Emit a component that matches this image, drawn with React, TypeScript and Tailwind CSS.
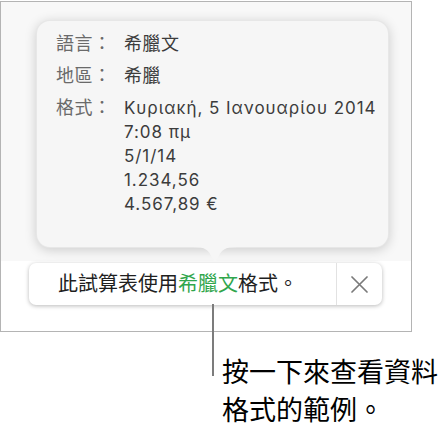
const font = { fontFamily: '"Inter", "Noto Sans CJK TC", sans-serif' };

const rows: { label: string; lines: string[] }[] = [
  { label: "語言：", lines: ["希臘文"] },
  { label: "地區：", lines: ["希臘"] },
  {
    label: "格式：",
    lines: ["Κυριακή, 5 Ιανουαρίου 2014", "7:08 πμ", "5/1/14", "1.234,56", "4.567,89 €"],
  },
];

export default function App() {
  return (
    <div className="relative h-[427px] w-[443px] overflow-hidden bg-white" style={font}>
      {/* window */}
      <div className="mt-px flex h-[331px] w-[412px] flex-col border border-[#b4b4b4] bg-white">
        <div className="h-[259px] shrink-0 bg-[#f8f8f8] pl-[35px] pt-[18px]">
          {/* popover */}
          <div className="relative h-[228px] w-[353px] rounded-[14px] border border-black/[0.06] bg-[#f6f6f6] pl-[19px] pt-[11px] shadow-[0_2px_12px_rgba(0,0,0,0.18)]">
            <div className="flex flex-col gap-[8px] leading-[24px]">
              {rows.map((r) => (
                <div key={r.label} className="flex">
                  <div className="w-[68px] shrink-0 text-[18px] tracking-[0.5px] text-[#6a6a6a]">{r.label}</div>
                  <div className="text-[#3c3c3c]">
                    {r.lines.map((l) => (
                      <div
                        key={l}
                        className={/[a-zA-Z0-9Α-ω]/.test(l) ? "text-[17px] tracking-[0.95px]" : "text-[18px] tracking-[0.5px]"}
                      >
                        {l}
                      </div>
                    ))}
                  </div>
                </div>
              ))}
            </div>
            {/* pointer */}
            <svg
              className="absolute left-[156px] top-[225px]"
              width="44"
              height="20"
              viewBox="0 0 44 20"
            >
              <path
                d="M0 1 C12 1 16 4 19 12 Q22 19 25 12 C28 4 32 1 44 1 Z"
                fill="#f6f6f6"
              />
            </svg>
          </div>
        </div>
        {/* info bar */}
        <div className="ml-[28px] mt-[2px] flex h-[42px] w-[353px] items-center rounded-[7px] bg-white shadow-[0_1px_4px_rgba(0,0,0,0.28)]">
          <div className="flex-1 pl-[29px] text-[20px] leading-none text-[#1f1f1f]">
            此試算表使用<span className="text-[#30a64c]">希臘文</span>格式。
          </div>
          <div className="flex h-full w-[46px] items-center justify-center border-l border-[#e2e2e2]">
            <svg width="17" height="17" viewBox="0 0 17 17">
              <path d="M1 1 L16 16 M16 1 L1 16" stroke="#7a7a7a" strokeWidth="1.7" strokeLinecap="round" />
            </svg>
          </div>
        </div>
      </div>

      {/* leader line */}
      <div className="absolute left-[212px] top-[304px] h-[72px] w-[2px] bg-[#7c7c7c]" />

      {/* callout */}
      <div className="ml-[222px] mt-[22px] text-[27px] leading-[38px] text-black">
        按一下來查看資料
        <br />
        格式的範例。
      </div>
    </div>
  );
}
